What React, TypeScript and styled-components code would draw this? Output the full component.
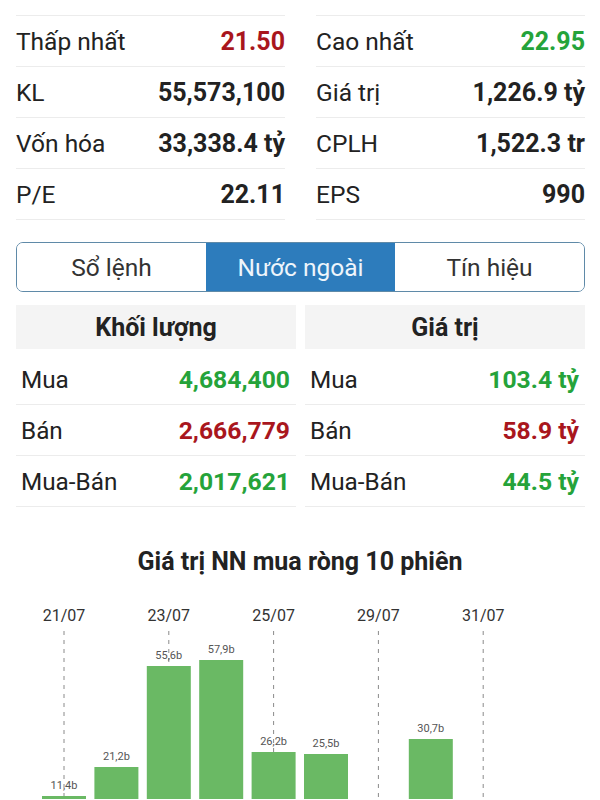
import React from "react";
import styled, { createGlobalStyle } from "styled-components";

type Tone = "up" | "down" | "ref" | "plain";

type Stat = { label: string; value: string; tone: Tone };

const stats: [Stat, Stat][] = [
  [
    { label: "Tham chiếu", value: "22.20", tone: "ref" },
    { label: "Mở cửa", value: "22.00", tone: "down" },
  ],
  [
    { label: "Thấp nhất", value: "21.50", tone: "down" },
    { label: "Cao nhất", value: "22.95", tone: "up" },
  ],
  [
    { label: "KL", value: "55,573,100", tone: "plain" },
    { label: "Giá trị", value: "1,226.9 tỷ", tone: "plain" },
  ],
  [
    { label: "Vốn hóa", value: "33,338.4 tỷ", tone: "plain" },
    { label: "CPLH", value: "1,522.3 tr", tone: "plain" },
  ],
  [
    { label: "P/E", value: "22.11", tone: "plain" },
    { label: "EPS", value: "990", tone: "plain" },
  ],
];

const tabs = ["Sổ lệnh", "Nước ngoài", "Tín hiệu"];

const foreign = [
  {
    title: "Khối lượng",
    rows: [
      { label: "Mua", value: "4,684,400", tone: "up" as Tone },
      { label: "Bán", value: "2,666,779", tone: "down" as Tone },
      { label: "Mua-Bán", value: "2,017,621", tone: "up" as Tone },
    ],
  },
  {
    title: "Giá trị",
    rows: [
      { label: "Mua", value: "103.4 tỷ", tone: "up" as Tone },
      { label: "Bán", value: "58.9 tỷ", tone: "down" as Tone },
      { label: "Mua-Bán", value: "44.5 tỷ", tone: "up" as Tone },
    ],
  },
];

// top of each bar in chart coords (null = negative / not drawn)
const bars: { top: number | null; label: string }[] = [
  { top: 201, label: "11,4b" },
  { top: 172, label: "21,2b" },
  { top: 71, label: "55,6b" },
  { top: 65, label: "57,9b" },
  { top: 157, label: "26,2b" },
  { top: 159, label: "25,5b" },
  { top: null, label: "" },
  { top: 144, label: "30,7b" },
  { top: null, label: "" },
  { top: null, label: "" },
];

const dates = ["21/07", "23/07", "25/07", "29/07", "31/07"];

const toneColor = (t: Tone) =>
  t === "up" ? "#25a33a" : t === "down" ? "#a9161d" : t === "ref" ? "#e2b200" : "#222";

const GlobalStyle = createGlobalStyle`
  html, body {
    margin: 0;
    padding: 0;
    background: #fff;
    overflow: hidden;
  }
  body {
    font-family: Roboto, "Noto Sans", sans-serif;
    color: #222;
  }
`;

const BAR_X0 = 42;
const PITCH = 52.4;
const BAR_W = 44;
const CHART_H = 204;

const NetChart: React.FC = () => (
  <ChartSvg width={600} height={CHART_H} viewBox={`0 0 600 ${CHART_H}`}>
    {dates.map((d, i) => {
      const cx = BAR_X0 + BAR_W / 2 + PITCH * 2 * i;
      return (
        <g key={d}>
          <text x={cx} y={26} textAnchor="middle" fontSize={16} fill="#333">
            {d}
          </text>
          <line
            x1={cx}
            x2={cx}
            y1={36}
            y2={CHART_H}
            stroke="#8a8a8a"
            strokeWidth={1}
            strokeDasharray="4 5"
          />
        </g>
      );
    })}
    {bars.map((b, i) => {
      if (b.top === null) return null;
      const x = BAR_X0 + PITCH * i;
      return (
        <g key={i}>
          <rect x={x} y={b.top} width={BAR_W} height={CHART_H - b.top} fill="#6ab964" />
          <text x={x + BAR_W / 2} y={b.top - 7} textAnchor="middle" fontSize={11} fill="#555">
            {b.label}
          </text>
        </g>
      );
    })}
  </ChartSvg>
);

const App: React.FC = () => {
  return (
    <Page>
      <GlobalStyle />
      <StatsGrid>
        {stats.flat().map((s) => (
          <StatRow key={s.label}>
            <StatLabel>{s.label}</StatLabel>
            <StatValue $tone={s.tone}>{s.value}</StatValue>
          </StatRow>
        ))}
      </StatsGrid>

      <TabBar>
        {tabs.map((t) => (
          <Tab key={t} $active={t === "Nước ngoài"}>
            {t}
          </Tab>
        ))}
      </TabBar>

      <ForeignGrid>
        {foreign.map((col) => (
          <ForeignColumn key={col.title}>
            <ForeignHeader>{col.title}</ForeignHeader>
            {col.rows.map((r) => (
              <ForeignRow key={r.label}>
                <ForeignLabel>{r.label}</ForeignLabel>
                <ForeignValue $tone={r.tone}>{r.value}</ForeignValue>
              </ForeignRow>
            ))}
          </ForeignColumn>
        ))}
      </ForeignGrid>

      <ChartTitle>Giá trị NN mua ròng 10 phiên</ChartTitle>
      <NetChart />
    </Page>
  );
};

const Page = styled.div`
  width: 600px;
  height: 800px;
  overflow: hidden;
  box-sizing: border-box;
`;

const StatsGrid = styled.div`
  display: grid;
  grid-template-columns: 1fr 1fr;
  column-gap: 31px;
  padding: 0 15px 0 16px;
  margin-top: -35px;
`;

const StatRow = styled.div`
  height: 50px;
  display: flex;
  justify-content: space-between;
  align-items: center;
  border-bottom: 1px solid #ececec;
`;

const StatLabel = styled.span`
  font-size: 24.5px;
  color: #222;
`;

const StatValue = styled.span<{ $tone: Tone }>`
  font-size: 25px;
  font-weight: 700;
  color: ${(p) => toneColor(p.$tone)};
`;

const TabBar = styled.div`
  display: grid;
  grid-template-columns: 1fr 1fr 1fr;
  height: 50px;
  margin: 22px 15px 0 16px;
  border: 1.5px solid #5f8aa8;
  border-radius: 7px;
  overflow: hidden;
  box-sizing: border-box;
`;

const Tab = styled.div<{ $active: boolean }>`
  display: flex;
  align-items: center;
  justify-content: center;
  font-size: 24.5px;
  color: ${(p) => (p.$active ? "#eef5fb" : "#333")};
  background: ${(p) => (p.$active ? "#2d7cbc" : "#fff")};
`;

const ForeignGrid = styled.div`
  display: grid;
  grid-template-columns: 1fr 1fr;
  column-gap: 9px;
  padding: 0 15px 0 16px;
  margin-top: 13px;
`;

const ForeignColumn = styled.div`
  display: flex;
  flex-direction: column;
`;

const ForeignHeader = styled.div`
  height: 44px;
  display: flex;
  align-items: center;
  justify-content: center;
  background: #f4f4f4;
  font-size: 25px;
  font-weight: 700;
  color: #222;
  margin-bottom: 5px;
`;

const ForeignRow = styled.div`
  height: 50px;
  display: flex;
  justify-content: space-between;
  align-items: center;
  padding: 0 6px 0 5px;
  border-bottom: 1px solid #ececec;
`;

const ForeignLabel = styled.span`
  font-size: 24.3px;
  color: #222;
`;

const ForeignValue = styled.span<{ $tone: Tone }>`
  font-size: 24.7px;
  font-weight: 700;
  color: ${(p) => toneColor(p.$tone)};
`;

const ChartTitle = styled.h2`
  margin: 43px 0 0;
  line-height: 24px;
  font-size: 25px;
  font-weight: 700;
  text-align: center;
  color: #222;
`;

const ChartSvg = styled.svg`
  display: block;
  margin-top: 21px;
  font-family: Roboto, sans-serif;
`;

export default App;
